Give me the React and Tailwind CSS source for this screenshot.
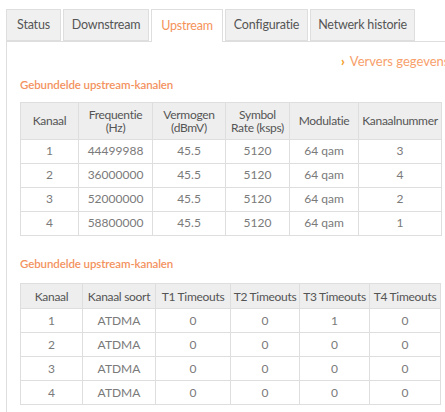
import React from "react";

const tabs = [
  ["Status", "w-[55px]"],
  ["Downstream", "w-[86px]"],
  ["Upstream", "w-[72px]"],
  ["Configuratie", "w-[83px]"],
  ["Netwerk historie", "w-[105px]"],
];

const t1 = [
  ["1", "44499988", "45.5", "5120", "64 qam", "3"],
  ["2", "36000000", "45.5", "5120", "64 qam", "4"],
  ["3", "52000000", "45.5", "5120", "64 qam", "2"],
  ["4", "58800000", "45.5", "5120", "64 qam", "1"],
];
const t1w = [58, 74, 73, 64, 69, 83];

const t2 = [
  ["1", "ATDMA", "0", "0", "1", "0"],
  ["2", "ATDMA", "0", "0", "0", "0"],
  ["3", "ATDMA", "0", "0", "0", "0"],
  ["4", "ATDMA", "0", "0", "0", "0"],
];
const t2w = [62, 73, 75, 69, 70, 71];

function Table({ head, rows, widths, headH }) {
  return (
    <table className="border-collapse table-fixed" style={{ width: widths.reduce((a, b) => a + b, 0) }}>
      <colgroup>
        {widths.map((w, i) => (
          <col key={i} style={{ width: w }} />
        ))}
      </colgroup>
      <thead>
        <tr className={headH}>
          {head.map((h, i) => (
            <th
              key={i}
              className="whitespace-nowrap border border-[#dedede] bg-[#eeeeee] px-0 text-center align-middle text-[12px] font-normal leading-[13px] tracking-[-0.3px] text-[#555555]"
            >
              {h}
            </th>
          ))}
        </tr>
      </thead>
      <tbody>
        {rows.map((r, ri) => (
          <tr key={ri} className="h-[24px]">
            {r.map((c, ci) => (
              <td
                key={ci}
                className="border border-[#dedede] text-center align-middle text-[12px] leading-none text-[#7a7a7a]"
              >
                {c}
              </td>
            ))}
          </tr>
        ))}
      </tbody>
    </table>
  );
}

export default function App() {
  return (
    <div
      className="relative h-[412px] w-[445px] overflow-hidden bg-white"
      style={{ fontFamily: "Lato, 'Open Sans', sans-serif" }}
    >
      <div className="pl-[6px] pt-[9px]">
        <div className="flex gap-[2px]">
          {tabs.map(([t, w]) => {
            const active = t === "Upstream";
            return (
              <div
                key={t}
                className={
                  (active
                    ? "relative z-10 h-[33px] border-b-0 bg-white text-[#f5925a] "
                    : "h-[32px] bg-[#f0f0f0] text-[#555555] ") +
                  w +
                  " flex items-center justify-center whitespace-nowrap border border-[#dedede] text-[12.5px] tracking-[-0.2px]"
                }
              >
                {t}
              </div>
            );
          })}
        </div>
        <div className="-mt-px w-[600px] border-l border-t border-[#dedede] pb-6 pl-[13px]">
          <div className="flex pl-[321px] pt-[10px]">
            <div className="flex items-center gap-[5px] whitespace-nowrap text-[13px] text-[#f7a06b]">
              <span className="text-[13px] font-black text-[#f39a1e]">›</span>
              <span>Ververs gegevens</span>
            </div>
          </div>
          <div className="mt-[4px] text-[11.5px] font-semibold tracking-[-0.1px] text-[#f39260]">
            Gebundelde upstream-kanalen
          </div>
          <div className="mt-[9px]">
            <Table
              head={[
                "Kanaal",
                <>Frequentie<br />(Hz)</>,
                <>Vermogen<br />(dBmV)</>,
                <>Symbol<br />Rate (ksps)</>,
                "Modulatie",
                "Kanaalnummer",
              ]}
              rows={t1}
              widths={t1w}
              headH="h-[37px]"
            />
          </div>
          <div className="mt-[19px] text-[11.5px] font-semibold tracking-[-0.1px] text-[#f39260]">
            Gebundelde upstream-kanalen
          </div>
          <div className="mt-[11px]">
            <Table
              head={["Kanaal", "Kanaal soort", "T1 Timeouts", "T2 Timeouts", "T3 Timeouts", "T4 Timeouts"]}
              rows={t2}
              widths={t2w}
              headH="h-[25px]"
            />
          </div>
        </div>
      </div>
    </div>
  );
}
